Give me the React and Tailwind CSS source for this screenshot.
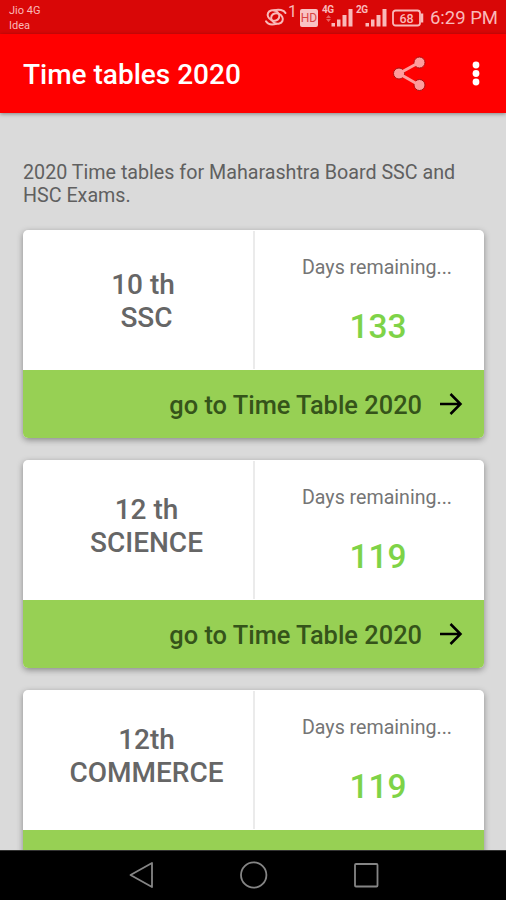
import React from "react";

const boards = [
    { id: "ssc", lines: ["10 th ", "SSC"], days: 133, pad: "pt-[38px]", link: true },
    { id: "science", lines: ["12 th", "SCIENCE"], days: 119, pad: "pt-[33px]", link: true },
    { id: "commerce", lines: ["12th", "COMMERCE"], days: 119, pad: "pt-[33px]", link: false },
];

const SignalIcon = ({ label, arrows }) => (
    <div className="relative w-7 h-6">
        <svg viewBox="0 0 28 24" className="w-7 h-6" fill="#f9b9b9">
            <rect x="6.500" y="17" width="3.500" height="3.500" />
            <rect x="12" y="13.500" width="3.500" height="7" />
            <rect x="17.500" y="9" width="4" height="11.500" />
            <rect x="23.500" y="3" width="4" height="17.500" />
            {arrows && (
                <path d="M1 12l2.500-3 2.500 3zM1 13l2.500 3 2.500-3z" opacity="0.500" />
            )}
        </svg>
        <span className="absolute -left-[3px] -top-px text-[10px] leading-[10px] font-bold tracking-[-0.3px]">
            {label}
        </span>
    </div>
);

const StatusBar = () => (
    <div className="h-[34px] shrink-0 bg-[#d90707] text-[#f9b9b9] flex justify-between">
        <div className="pl-[9px] pt-[3px] text-[11px] leading-[15px]">
            <div>Jio 4G</div>
            <div>Idea</div>
        </div>
        <div className="flex items-start pt-[7px] pr-[8px]">
            <svg
                viewBox="0 0 24 22"
                className="w-6 h-[22px]"
                fill="none"
                stroke="#f9b9b9"
                strokeWidth="2"
                strokeLinecap="round"
            >
                <ellipse cx="9.500" cy="8.500" rx="6" ry="5" transform="rotate(25 9.500 8.500)" />
                <ellipse cx="13" cy="11.500" rx="6" ry="5" transform="rotate(25 13 11.500)" />
                <path d="M10 3.300c5-1.300 10-.3 11.500 2.700M12.500 16.800c-5 1.200-9 .2-10.500-2.500" />
            </svg>
            <span className="w-[12px] -mt-[2px] text-[16px] leading-[14px]">1</span>
            <div className="mt-[2px] w-[18px] h-[18px] rounded-[2px] bg-[#f9c3c3] text-[#d94545] text-[12px] leading-[18px] text-center">
                HD
            </div>
            <div className="ml-[7px] -mt-[1px] flex gap-[6px]">
                <SignalIcon label="4G" arrows />
                <SignalIcon label="2G" />
            </div>
            <svg
                viewBox="0 0 32 18"
                className="ml-[5px] mt-[2px] w-8 h-[18px]"
                fill="none"
                stroke="#f9b9b9"
                strokeWidth="1.800"
            >
                <rect x="1" y="1.500" width="27" height="15" rx="2.500" />
                <path d="M30 4.500v9" strokeWidth="2.500" />
                <text
                    x="14.500"
                    y="13.500"
                    textAnchor="middle"
                    fontSize="12.500"
                    fontWeight="500"
                    fill="#f9b9b9"
                    stroke="none"
                >
                    68
                </text>
            </svg>
            <span className="ml-[6px] text-[18.5px] leading-[23px]">6:29 PM</span>
        </div>
    </div>
);

const AppBar = () => (
    <header className="relative z-10 h-[79px] shrink-0 bg-[#ff0000] flex items-center justify-between pl-[23px] pr-[26px] shadow-[0_1px_4px_rgba(0,0,0,0.4)]">
        <h1 className="pt-[3px] text-[28px] font-medium text-white whitespace-nowrap">
            Time tables 2020
        </h1>
        <div className="flex items-center">
            <svg viewBox="0 0 34 36" className="w-[34px] h-9">
                <g fill="#ff9c9c" stroke="#a81010" strokeWidth="1">
                    <circle cx="26.500" cy="6.500" r="5.500" />
                    <circle cx="6" cy="17.500" r="5.500" />
                    <circle cx="26.500" cy="29" r="5.500" />
                </g>
                <path
                    d="M26 6.500L6 17.500l20 11.500"
                    fill="none"
                    stroke="#ff9c9c"
                    strokeWidth="3"
                />
            </svg>
            <svg viewBox="0 0 8 26" className="ml-[45px] w-2 h-[26px]" fill="#fff">
                <circle cx="4" cy="4" r="3.400" />
                <circle cx="4" cy="12.500" r="3.400" />
                <circle cx="4" cy="21" r="3.400" />
            </svg>
        </div>
    </header>
);

const BoardCard = ({ board }) => (
    <section className="h-[208px] shrink-0 rounded-[5px] overflow-hidden bg-white shadow-[0_2px_6px_rgba(0,0,0,0.38)]">
        <div className="h-[140px] flex">
            <div
                className={`w-[230px] pl-[17px] ${board.pad} text-center text-[28px] leading-[33px] font-medium text-[#666]`}
            >
                {board.lines.map((line) => (
                    <div key={line} className="whitespace-pre">
                        {line}
                    </div>
                ))}
            </div>
            <div className="w-[2px] h-[138px] mt-px bg-[#ebebeb]" />
            <div className="flex-1 pl-[15px] text-center">
                <div className="pt-[26px] text-[19.6px] leading-[23px] text-[#757575]">
                    Days remaining...
                </div>
                <div className="mt-[28px] pl-[2px] text-[33.5px] leading-[40px] font-medium text-[#7ed348]">
                    {board.days}
                </div>
            </div>
        </div>
        <button className="w-full h-[68px] bg-[#97d054] flex items-center justify-end pr-[20px] text-[25.4px] font-medium text-[#35541a]">
            {board.link && (
                <>
                    <span className="pt-[3px]">go to Time Table 2020</span>
                    <svg
                        viewBox="0 0 26 26"
                        className="ml-[16px] mt-px w-[26px] h-[26px]"
                        fill="none"
                        stroke="#000"
                        strokeWidth="2.500"
                    >
                        <path d="M2 12h20M12.500 2l10 10-10 10" />
                    </svg>
                </>
            )}
        </button>
    </section>
);

const NavBar = () => (
    <nav className="h-[50px] shrink-0 bg-black border-t border-[#333]">
        <svg
            viewBox="0 0 506 49"
            className="w-full h-[49px]"
            fill="none"
            stroke="#858585"
            strokeWidth="1.800"
            strokeLinejoin="round"
        >
            <path d="M152 12v24L130.500 24z" />
            <circle cx="253.700" cy="24" r="12.700" />
            <rect x="355" y="13" width="22.500" height="22.500" rx="1" />
        </svg>
    </nav>
);

export default function App() {
    return (
        <div className="w-[506px] h-[900px] overflow-hidden flex flex-col bg-[#dadada] font-['Roboto',sans-serif]">
            <StatusBar />
            <AppBar />
            <main className="flex-1 min-h-0 overflow-hidden px-[22px] pt-[48px]">
                <p className="pl-px text-[19.7px] leading-[23px] text-[#606060]">
                    2020 Time tables for Maharashtra Board SSC and HSC Exams.
                </p>
                <div className="mt-[23px] mx-px w-[461px] flex flex-col gap-[22px]">
                    {boards.map((board) => (
                        <BoardCard key={board.id} board={board} />
                    ))}
                </div>
            </main>
            <NavBar />
        </div>
    );
}
